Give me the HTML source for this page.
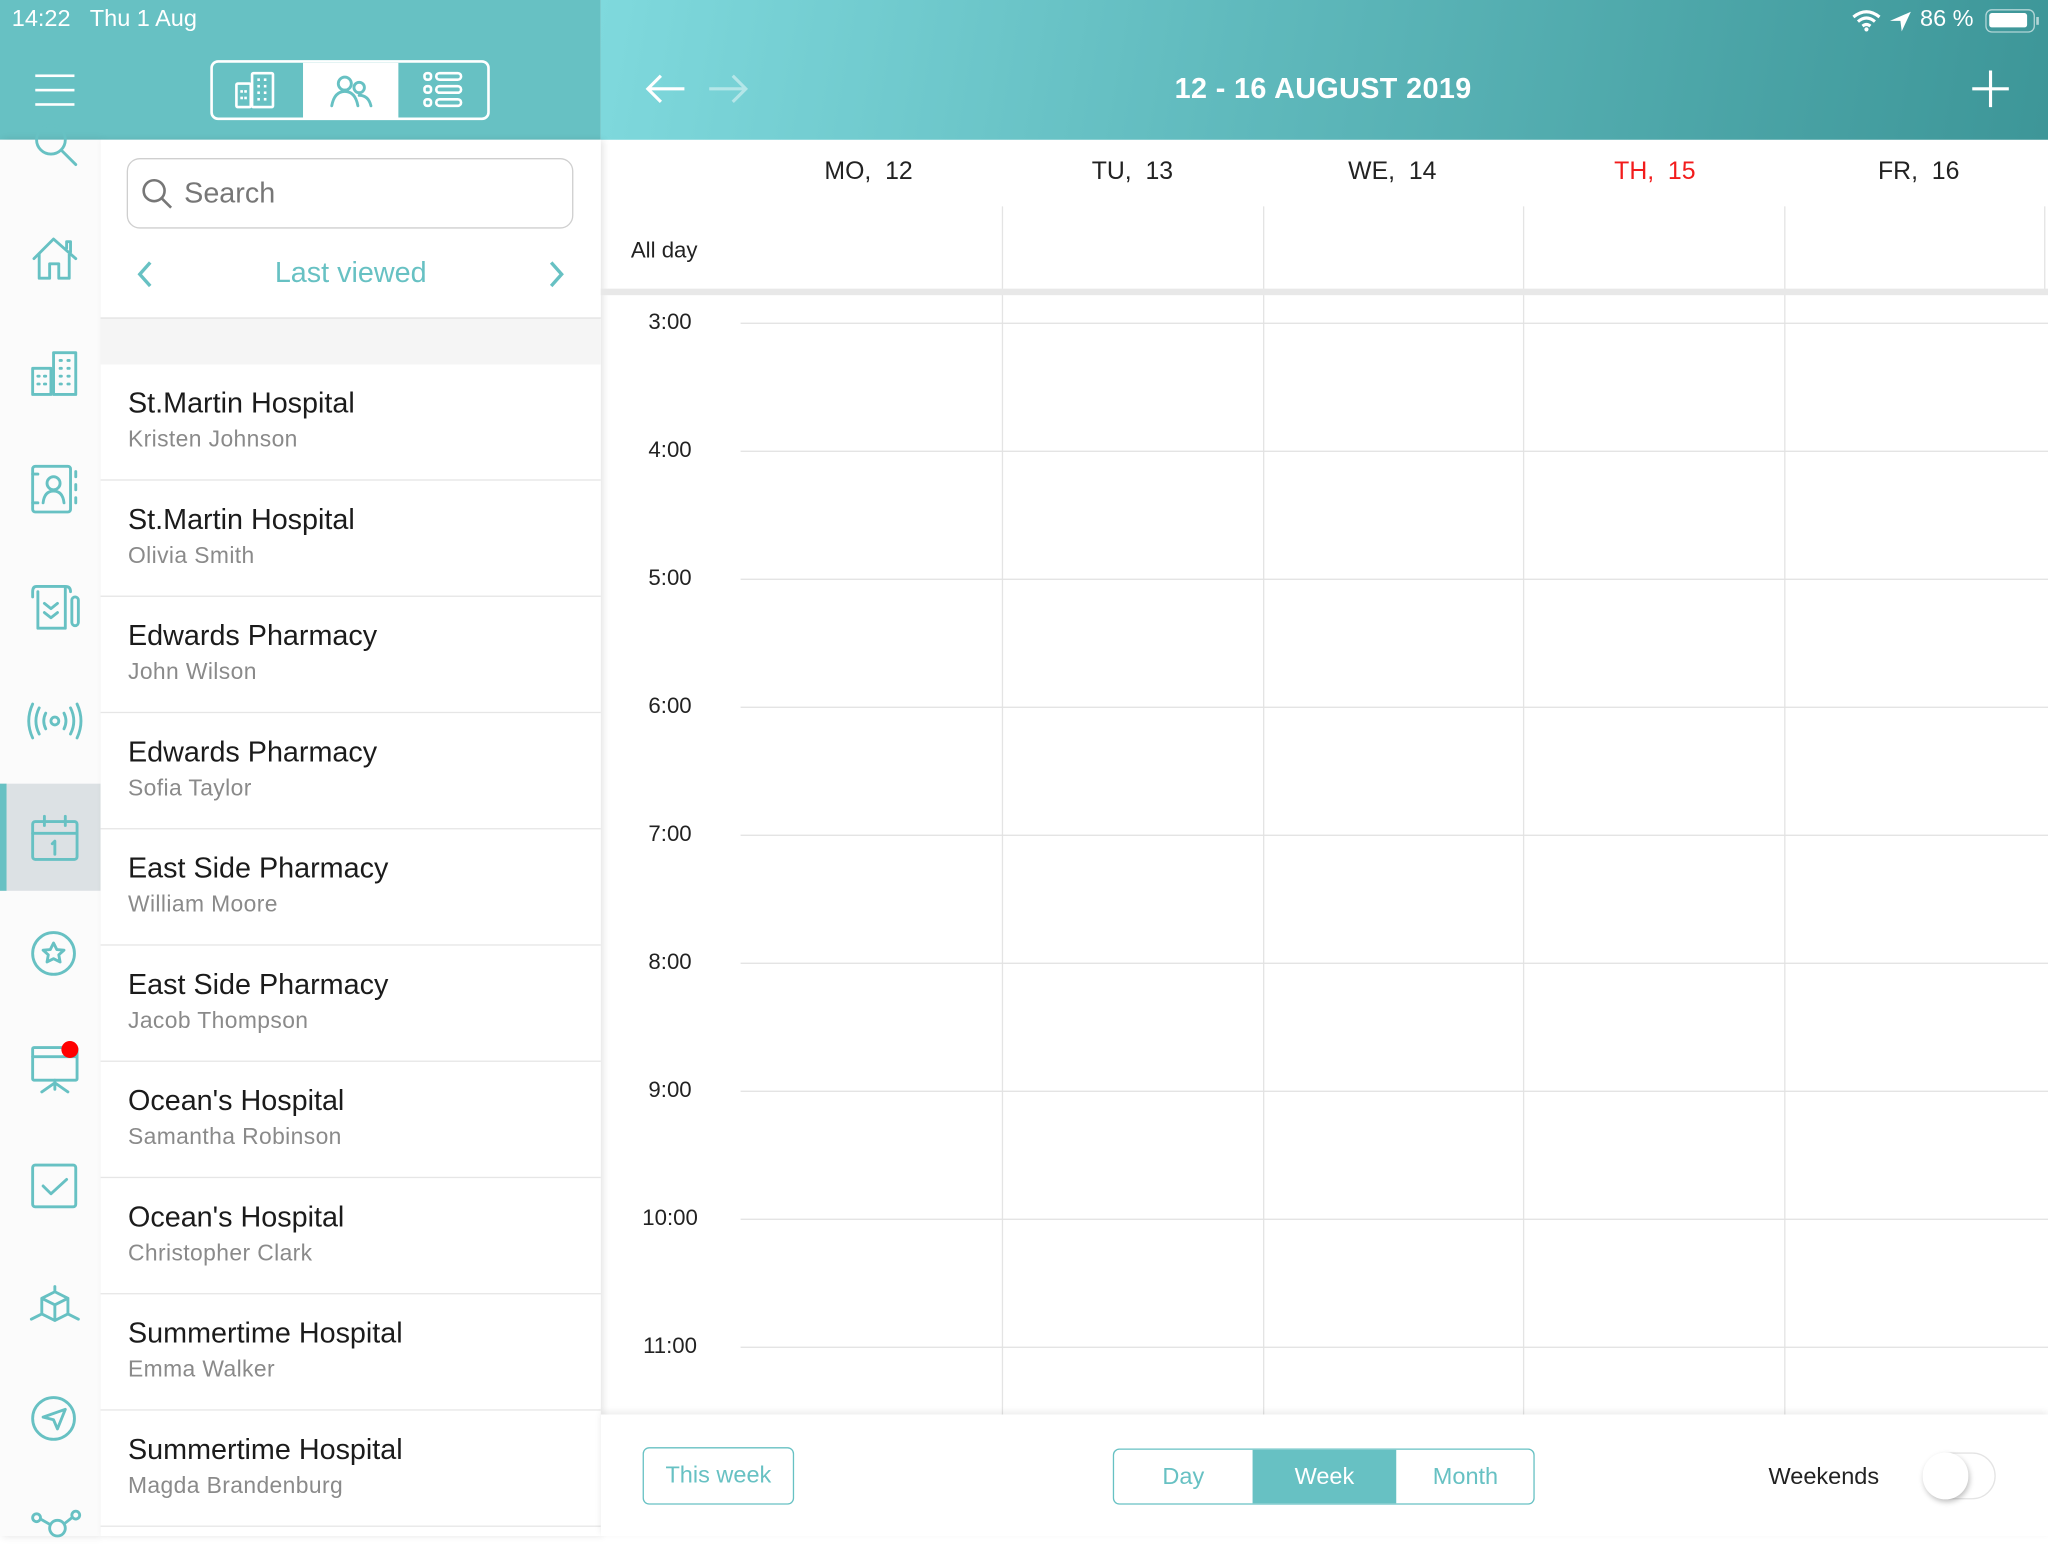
<!DOCTYPE html>
<html><head><meta charset="utf-8"><style>
*{margin:0;padding:0;box-sizing:border-box}
html,body{width:2048px;height:1536px;overflow:hidden;background:#fff}
#w{position:absolute;left:0;top:0;width:1568px;height:1176px;transform:scale(1.306122);transform-origin:0 0;font-family:"Liberation Sans",sans-serif;background:#fff}
.a{position:absolute}
.hl{position:absolute;left:0;top:0;width:460px;height:107px;background:#67c1c3}
.hr{position:absolute;left:460px;top:0;width:1108px;height:107px;background:linear-gradient(100deg,#7fd9dd 0%,#5fb9bc 45%,#3d9698 100%)}
.st{color:#fff;font-size:18px;top:4px}
.side{left:0;top:107px;width:77px;height:1069px;background:#fbfbfb;box-shadow:2px 0 6px rgba(0,0,0,.12)}
.list{left:77px;top:107px;width:383px;height:1069px;background:#fff;box-shadow:2px 0 5px rgba(0,0,0,.1)}
.item{position:absolute;left:0;width:383px;height:89px;border-bottom:1px solid #e6e6e6}
.item .t{position:absolute;left:21px;top:17px;font-size:22px;color:#1b1b1b}
.item .s{position:absolute;left:21px;top:47px;font-size:17.5px;color:#8a8a8a;letter-spacing:.3px}
.dh{top:121px;font-size:19px;color:#222;width:200px;text-align:center}
.vl{position:absolute;top:158px;width:1px;height:925px;background:#e4e4e4}
.hln{position:absolute;left:567px;width:1001px;height:1px;background:#e2e2e2}
.tm{position:absolute;left:470px;width:86px;text-align:center;font-size:17px;color:#222}
svg{position:absolute;overflow:visible}
.ic{fill:none;stroke:#67c1c3;stroke-width:2.2;stroke-linecap:round;stroke-linejoin:round}
</style></head><body><div id="w">
<div class="hl"></div><div class="hr"></div>
<div class="a st" style="left:9px">14:22&nbsp;&nbsp; Thu 1 Aug</div>
<div class="a st" style="left:1470px">86 %</div>
<svg style="left:1418px;top:8px" width="22" height="16"><path d="M1 5 Q11 -3 21 5 M4.5 8.5 Q11 3 17.5 8.5 M8 12 Q11 9.5 14 12" stroke="#fff" stroke-width="2.4" fill="none"/><circle cx="11" cy="14.5" r="1.6" fill="#fff"/></svg>
<svg style="left:1446px;top:8px" width="18" height="16"><path d="M17 1 L1 8 L9 8 L10 16Z" fill="#fff"/></svg>
<div class="a" style="left:1520px;top:7px;width:38px;height:18px;border:1.5px solid rgba(255,255,255,.6);border-radius:5px"><div style="margin:2px;width:29px;height:11px;background:#fff;border-radius:2px"></div></div>
<div class="a" style="left:1559px;top:13px;width:2px;height:6px;background:rgba(255,255,255,.6)"></div>
<!-- hamburger -->
<div class="a" style="left:27px;top:57px;width:30px;height:2px;background:#fff;box-shadow:0 11px 0 #fff,0 22px 0 #fff"></div>
<!-- segmented header -->
<div class="a" style="left:161px;top:46px;width:214px;height:46px;border:2px solid #fff;border-radius:6px;overflow:hidden">
<div class="a" style="left:69px;top:0;width:73px;height:44px;background:#fff"></div></div>
<svg style="left:180px;top:55px" width="32" height="28"><g fill="none" stroke="#fff" stroke-width="2"><rect x="1" y="9" width="11" height="18" rx="1"/><rect x="13" y="1" width="16" height="26" rx="1"/></g><g fill="#fff"><rect x="4" y="14" width="2" height="2"/><rect x="7" y="14" width="2" height="2"/><rect x="4" y="19" width="2" height="2"/><rect x="7" y="19" width="2" height="2"/><rect x="17" y="5" width="2" height="2"/><rect x="22" y="5" width="2" height="2"/><rect x="17" y="10" width="2" height="2"/><rect x="22" y="10" width="2" height="2"/><rect x="17" y="15" width="2" height="2"/><rect x="22" y="15" width="2" height="2"/><rect x="17" y="20" width="2" height="2"/><rect x="22" y="20" width="2" height="2"/></g></svg>
<svg style="left:253px;top:56px" width="32" height="28" class="ic"><circle cx="11" cy="8" r="5"/><path d="M1 25 Q3 14 11 14 Q19 14 21 25"/><circle cx="22" cy="11" r="4"/><path d="M22 17 Q29 17 31 25"/></svg>
<svg style="left:324px;top:54px" width="32" height="30"><g fill="none" stroke="#fff" stroke-width="2"><rect x="1" y="2" width="5" height="5" rx="2"/><rect x="1" y="12" width="5" height="5" rx="2"/><rect x="1" y="22" width="5" height="5" rx="2"/><rect x="10" y="2" width="19" height="5" rx="2.5"/><rect x="10" y="12" width="19" height="5" rx="2.5"/><rect x="10" y="22" width="19" height="5" rx="2.5"/></g></svg>
<!-- calendar header -->
<svg style="left:493px;top:55px" width="80" height="26"><path d="M31 13 H3 M13 3 L3 13 L13 23" stroke="#fff" stroke-width="2.4" fill="none"/><path d="M50 13 H78 M68 3 L78 13 L68 23" stroke="rgba(255,255,255,.45)" stroke-width="2.4" fill="none"/></svg>
<div class="a" style="left:860px;top:55px;width:306px;text-align:center;color:#fff;font-size:22px;font-weight:bold;letter-spacing:.3px">12 - 16 AUGUST 2019</div>
<svg style="left:1510px;top:54px" width="28" height="28"><path d="M14 0V28M0 14H28" stroke="#fff" stroke-width="2.4"/></svg>
<!-- sidebar -->
<div class="a side"></div>
<div class="a" style="left:0;top:600px;width:77px;height:82px;background:#dce1e4"></div>
<div class="a" style="left:0;top:600px;width:5px;height:82px;background:#67c1c3"></div>
<svg class="ic" style="left:24px;top:100px" width="40" height="30"><circle cx="15" cy="7" r="11"/><path d="M23 15 L34 26"/></svg>
<svg class="ic" style="left:25px;top:180px" width="34" height="34"><path d="M1 18 L16 3 L33 18 M5 14 V33 H13 V22 H20 V33 H28 V14 M26 10 V5 H29 V13"/></svg>
<svg class="ic" style="left:24px;top:268px" width="36" height="36"><rect x="1" y="14" width="14" height="20"/><rect x="17" y="2" width="17" height="32"/><path d="M5 20h1M10 20h1M5 26h1M10 26h1M22 8h1M28 8h1M22 14h1M28 14h1M22 20h1M28 20h1M22 26h1M28 26h1"/></svg>
<svg class="ic" style="left:24px;top:355px" width="36" height="40"><rect x="1" y="2" width="29" height="35" rx="2"/><circle cx="17" cy="15" r="5"/><path d="M9 30 Q10 21 17 21 Q24 21 25 30 M34 6v4M34 16v4M34 26v4 M1 8h4M1 30h4"/></svg>
<svg class="ic" style="left:24px;top:445px" width="38" height="40"><path d="M4 4 H26 V36 H5 V8 M4 4 Q1 4 1 8 V12 M26 4 Q30 4 30 8"/><path d="M10 17 L15 21 L20 17 M10 24 L15 28 L20 24"/><rect x="31" y="12" width="5" height="22" rx="2.5"/></svg>
<svg class="ic" style="left:23px;top:538px" width="38" height="30"><circle cx="19" cy="14" r="3"/><path d="M12 8 Q9 14 12 20 M26 8 Q29 14 26 20 M7 4 Q2 14 7 24 M31 4 Q36 14 31 24 M2 1 Q-4 14 2 27 M36 1 Q42 14 36 27"/></svg>
<svg class="ic" style="left:24px;top:624px" width="36" height="36"><rect x="1" y="5" width="34" height="29" rx="2"/><path d="M1 14 H35 M10 1V8 M26 1V8 M16 22 L18 20 V30"/></svg>
<svg class="ic" style="left:24px;top:712px" width="36" height="36"><circle cx="17" cy="18" r="16"/><path d="M17 10 L19.5 15 L25 15.5 L21 19 L22 24.5 L17 22 L12 24.5 L13 19 L9 15.5 L14.5 15Z"/></svg>
<svg class="ic" style="left:24px;top:800px" width="38" height="40"><rect x="1" y="2" width="34" height="25" rx="1"/><path d="M1 9 H35 M18 27 V34 M18 29 L8 36 M18 29 L28 36"/></svg>
<div class="a" style="left:47px;top:797px;width:13px;height:13px;border-radius:50%;background:#f00"></div>
<svg class="ic" style="left:24px;top:891px" width="36" height="36"><rect x="1" y="1" width="33" height="32" rx="2"/><path d="M9 17 L15 23 L27 12"/></svg>
<svg class="ic" style="left:22px;top:984px" width="40" height="32"><path d="M10 10 L20 5 L30 10 L20 15Z M10 10 V22 L20 27 L30 22 V10 M20 15 V27 M20 5 V1 M10 22 L2 26 M30 22 L38 26"/></svg>
<svg class="ic" style="left:24px;top:1069px" width="36" height="36"><circle cx="17" cy="17" r="16"/><path d="M26 10 L9 16 L17 18 L20 25Z"/></svg>
<svg class="ic" style="left:24px;top:1156px" width="40" height="30"><circle cx="4" cy="6" r="3"/><circle cx="34" cy="4" r="3"/><circle cx="20" cy="14" r="6"/><path d="M7 7 L14 11 M31 6 L26 10"/></svg>
<!-- list -->
<div class="a list">
<div class="a" style="left:20px;top:14px;width:342px;height:54px;border:1.5px solid #cfcfcf;border-radius:10px"></div>
<svg style="left:31px;top:29px" width="26" height="26"><circle cx="10" cy="10" r="8" stroke="#777" stroke-width="2" fill="none"/><path d="M16 16 L23 23" stroke="#777" stroke-width="2"/></svg>
<div class="a" style="left:64px;top:28px;font-size:22px;color:#777">Search</div>
<svg style="left:27px;top:92px" width="14" height="22"><path d="M11 2 L3 11 L11 20" stroke="#67c1c3" stroke-width="2.6" fill="none"/></svg>
<svg style="left:342px;top:92px" width="14" height="22"><path d="M3 2 L11 11 L3 20" stroke="#67c1c3" stroke-width="2.6" fill="none"/></svg>
<div class="a" style="left:0;top:89px;width:383px;text-align:center;font-size:22px;color:#67c1c3">Last viewed</div>
<div class="a" style="left:0;top:136px;width:383px;height:36px;background:#f5f5f5;border-top:1px solid #e3e3e3"></div>
<div class="item" style="top:172px"><div class="t">St.Martin Hospital</div><div class="s">Kristen Johnson</div></div>
<div class="item" style="top:261px"><div class="t">St.Martin Hospital</div><div class="s">Olivia Smith</div></div>
<div class="item" style="top:350px"><div class="t">Edwards Pharmacy</div><div class="s">John Wilson</div></div>
<div class="item" style="top:439px"><div class="t">Edwards Pharmacy</div><div class="s">Sofia Taylor</div></div>
<div class="item" style="top:528px"><div class="t">East Side Pharmacy</div><div class="s">William Moore</div></div>
<div class="item" style="top:617px"><div class="t">East Side Pharmacy</div><div class="s">Jacob Thompson</div></div>
<div class="item" style="top:706px"><div class="t">Ocean's Hospital</div><div class="s">Samantha Robinson</div></div>
<div class="item" style="top:795px"><div class="t">Ocean's Hospital</div><div class="s">Christopher Clark</div></div>
<div class="item" style="top:884px"><div class="t">Summertime Hospital</div><div class="s">Emma Walker</div></div>
<div class="item" style="top:973px"><div class="t">Summertime Hospital</div><div class="s">Magda Brandenburg</div></div>
</div>
<!-- calendar grid -->
<div class="a dh" style="left:565px">MO,&nbsp; 12</div>
<div class="a dh" style="left:767px">TU,&nbsp; 13</div>
<div class="a dh" style="left:966px">WE,&nbsp; 14</div>
<div class="a dh" style="left:1167px;color:#f21c1c">TH,&nbsp; 15</div>
<div class="a dh" style="left:1369px">FR,&nbsp; 16</div>
<div class="a" style="left:483px;top:182px;font-size:17px;color:#222">All day</div>
<div class="vl" style="left:767px"></div><div class="vl" style="left:967px"></div><div class="vl" style="left:1166px"></div><div class="vl" style="left:1366px"></div><div class="vl" style="left:1565px;height:64px"></div>
<div class="a" style="left:460px;top:221px;width:1108px;height:5px;background:#e8e8e8"></div>
<div class="hln" style="top:247px"></div><div class="hln" style="top:345px"></div><div class="hln" style="top:443px"></div><div class="hln" style="top:541px"></div><div class="hln" style="top:639px"></div><div class="hln" style="top:737px"></div><div class="hln" style="top:835px"></div><div class="hln" style="top:933px"></div><div class="hln" style="top:1031px"></div>
<div class="tm" style="top:237px">3:00</div><div class="tm" style="top:335px">4:00</div><div class="tm" style="top:433px">5:00</div><div class="tm" style="top:531px">6:00</div><div class="tm" style="top:629px">7:00</div><div class="tm" style="top:727px">8:00</div><div class="tm" style="top:825px">9:00</div><div class="tm" style="top:923px">10:00</div><div class="tm" style="top:1021px">11:00</div>
<!-- bottom bar -->
<div class="a" style="left:460px;top:1083px;width:1108px;height:93px;background:#fff;box-shadow:0 -2px 5px rgba(0,0,0,.08)"></div>
<div class="a" style="left:492px;top:1108px;width:116px;height:44px;border:1.5px solid #67c1c3;border-radius:5px;color:#67c1c3;font-size:18px;text-align:center;line-height:41px">This week</div>
<div class="a" style="left:852px;top:1109px;width:323px;height:43px;border:1.5px solid #67c1c3;border-radius:5px;overflow:hidden;font-size:18px;color:#67c1c3;line-height:41px">
<div class="a" style="left:0;width:106px;text-align:center">Day</div>
<div class="a" style="left:106px;width:110px;height:41px;background:#67c1c3;color:#fff;text-align:center">Week</div>
<div class="a" style="left:216px;width:106px;text-align:center">Month</div></div>
<div class="a" style="left:1354px;top:1120px;font-size:18px;color:#222">Weekends</div>
<div class="a" style="left:1472px;top:1112px;width:56px;height:36px;border:1.5px solid #e4e4e4;border-radius:18px"></div>
<div class="a" style="left:1472px;top:1112px;width:35px;height:36px;border-radius:18px;background:#fff;box-shadow:1px 2px 4px rgba(0,0,0,.25)"></div>
</div></body></html>
